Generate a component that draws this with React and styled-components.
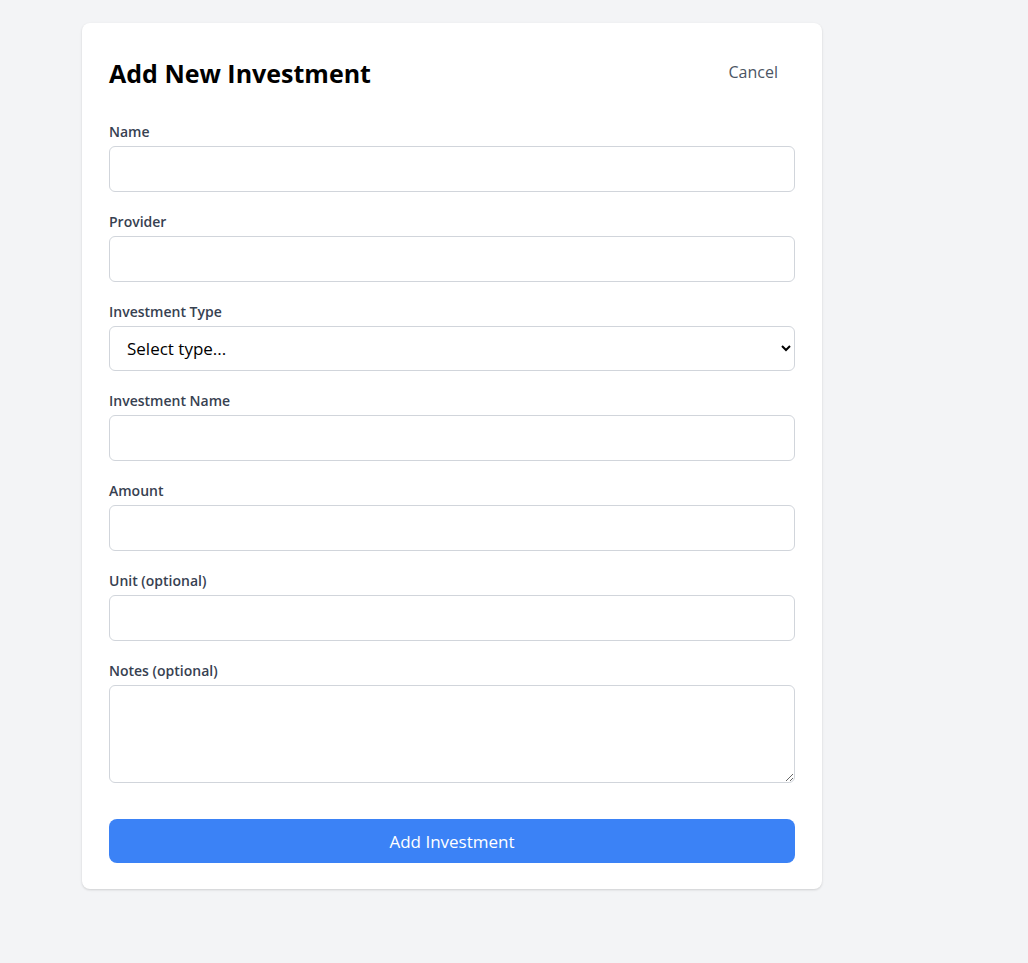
import React from "react";
import styled, { createGlobalStyle } from "styled-components";

const GlobalStyle = createGlobalStyle`
  html, body {
    margin: 0;
    padding: 0;
    background: #f3f4f6;
    font-family: "Open Sans", "Noto Sans", Arial, sans-serif;
  }
  * { box-sizing: border-box; }
`;

const Page = styled.div`
  min-height: 963px;
  padding: 23px 0 0 82px;
`;

const Card = styled.form`
  width: 740px;
  background: #ffffff;
  border-radius: 8px;
  box-shadow: 0 1px 3px rgba(0, 0, 0, 0.1), 0 1px 2px rgba(0, 0, 0, 0.06);
  padding: 27px 27px 26px;
  display: flex;
  flex-direction: column;
`;

const Header = styled.div`
  display: flex;
  align-items: center;
  justify-content: space-between;
  min-height: 46px;
  margin-bottom: 25px;
`;

const Title = styled.h2`
  margin: 0;
  font-size: 25px;
  line-height: 32px;
  font-weight: 700;
  color: #000000;
`;

const CancelButton = styled.button`
  border: none;
  background: transparent;
  font-family: inherit;
  font-size: 16px;
  line-height: 24px;
  color: #4b5563;
  padding: 8px 17px 8px 16px;
  margin-top: -2px;
  cursor: pointer;
`;

const Fields = styled.div`
  display: flex;
  flex-direction: column;
  gap: 19px;
`;

const Field = styled.div`
  display: flex;
  flex-direction: column;
  gap: 4px;
`;

const Label = styled.label`
  padding-top: 1px;
  font-size: 14px;
  line-height: 20px;
  font-weight: 600;
  color: #374151;
`;

const controlBase = `
  width: 100%;
  border: 1px solid #d1d5db;
  border-radius: 6px;
  background: #ffffff;
  font-family: inherit;
  font-size: 16px;
  color: #111827;
  outline: none;
`;

const Input = styled.input`
  ${controlBase}
  height: 46px;
  padding: 0 12px;
`;

const Select = styled.select`
  ${controlBase}
  height: 45px;
  padding: 0 8px 0 13px;
  font-size: 17px;
  color: #000000;
`;

const TextArea = styled.textarea`
  ${controlBase}
  height: 98px;
  padding: 10px 12px;
  resize: vertical;
`;

const SubmitButton = styled.button`
  margin-top: 36px;
  height: 44px;
  border: none;
  border-radius: 8px;
  background: #3b82f6;
  color: #ffffff;
  font-family: inherit;
  font-size: 17px;
  cursor: pointer;
`;

const fields = [
  { id: "name", label: "Name" },
  { id: "provider", label: "Provider" },
  { id: "type", label: "Investment Type", kind: "select" },
  { id: "investmentName", label: "Investment Name" },
  { id: "amount", label: "Amount" },
  { id: "unit", label: "Unit (optional)" },
  { id: "notes", label: "Notes (optional)", kind: "textarea" },
];

export default function App() {
  return (
    <>
      <GlobalStyle />
      <Page>
        <Card onSubmit={(e) => e.preventDefault()}>
          <Header>
            <Title>Add New Investment</Title>
            <CancelButton type="button">Cancel</CancelButton>
          </Header>
          <Fields>
            {fields.map((f) => (
              <Field key={f.id}>
                <Label htmlFor={f.id}>{f.label}</Label>
                {f.kind === "select" ? (
                  <Select id={f.id} defaultValue="">
                    <option value="">Select type...</option>
                    <option value="stock">Stock</option>
                    <option value="bond">Bond</option>
                    <option value="crypto">Crypto</option>
                  </Select>
                ) : f.kind === "textarea" ? (
                  <TextArea id={f.id} />
                ) : (
                  <Input id={f.id} type="text" />
                )}
              </Field>
            ))}
          </Fields>
          <SubmitButton type="submit">Add Investment</SubmitButton>
        </Card>
      </Page>
    </>
  );
}
